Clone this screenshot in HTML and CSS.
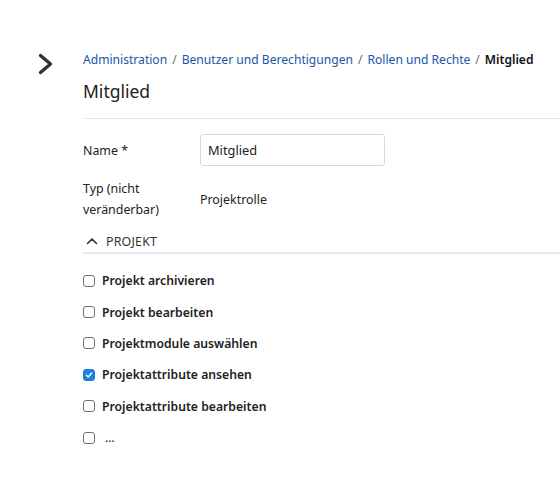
FILE: index.html
```html
<!DOCTYPE html>
<html lang="de">
<head>
<meta charset="utf-8">
<link rel="stylesheet" href="styles.css">
</head>
<body>
<div class="layout">
  <div class="side">
    <svg class="toggle" width="16" height="22" viewBox="0 0 16 22"><path d="M2.5 2.5 L12.5 11 L2.5 19.5" fill="none" stroke="#333" stroke-width="3.4" stroke-linecap="round" stroke-linejoin="round"/></svg>
  </div>
  <main class="content">
    <nav class="crumbs">
      <a href="#">Administration</a><span class="sep">/</span><a href="#">Benutzer und Berechtigungen</a><span class="sep">/</span><a href="#">Rollen und Rechte</a><span class="sep">/</span><span class="current">Mitglied</span>
    </nav>
    <h1 class="title">Mitglied</h1>
    <div class="divider"></div>
    <div class="row row-name">
      <label class="lbl">Name *</label>
      <input class="field" type="text" value="Mitglied">
    </div>
    <div class="row row-type">
      <div class="lbl">Typ (nicht<br>veränderbar)</div>
      <div class="val">Projektrolle</div>
    </div>
    <div class="section">
      <svg class="caret" width="12" height="8" viewBox="0 0 12 8"><path d="M1.5 6.5 L6 2 L10.5 6.5" fill="none" stroke="#333" stroke-width="1.6" stroke-linecap="round" stroke-linejoin="round"/></svg>
      <span>PROJEKT</span>
    </div>
    <ul class="perms">
      <li><span class="cb"></span>Projekt archivieren</li>
      <li><span class="cb"></span>Projekt bearbeiten</li>
      <li><span class="cb"></span>Projektmodule auswählen</li>
      <li><span class="cb on"><svg width="12" height="12" viewBox="0 0 12 12"><path d="M2.8 6.2 L5 8.3 L9.2 3.6" fill="none" stroke="#fff" stroke-width="1.7" stroke-linecap="round" stroke-linejoin="round"/></svg></span>Projektattribute ansehen</li>
      <li><span class="cb"></span>Projektattribute bearbeiten</li>
      <li><span class="cb"></span><span class="dots">…</span></li>
    </ul>
  </main>
</div>
</body>
</html>
```

FILE: styles.css
```css
html, body {
  margin: 0;
  padding: 0;
  background: #fff;
}
body {
  font-family: "Noto Sans", "Open Sans", sans-serif;
  color: #222;
  font-size: 12.4px;
}
.layout {
  display: flex;
}
.side {
  width: 83px;
  flex: none;
  padding: 53px 0 0 38px;
  box-sizing: border-box;
}
.toggle {
  display: block;
}
.content {
  flex: 1;
  min-width: 0;
}
.crumbs {
  margin-top: 50px;
  line-height: 20px;
  white-space: nowrap;
  font-size: 12.1px;
}
.crumbs a {
  color: #1a56a8;
  text-decoration: none;
}
.sep {
  margin: 0 5px;
  color: #666;
}
.current {
  font-weight: 600;
  color: #111;
}
.title {
  margin: 9px 0 0;
  font-size: 17.5px;
  font-weight: 400;
  line-height: 24px;
  color: #222;
}
.divider {
  margin-top: 15px;
  height: 1px;
  background: #e6e9ed;
}
.row {
  display: flex;
  align-items: center;
}
.lbl {
  width: 117px;
  flex: none;
  line-height: 21px;
}
.row-name {
  margin-top: 15px;
}
.field {
  width: 185px;
  height: 32px;
  box-sizing: border-box;
  border: 1px solid #d4d8de;
  border-radius: 3px;
  padding: 0 7px;
  font: inherit;
  font-size: 12.8px;
  color: #222;
  outline: none;
}
.row-type {
  margin-top: 12px;
}
.section {
  margin-top: 11px;
  display: flex;
  align-items: center;
  gap: 8px;
  padding: 0 0 1px 3px;
  height: 20px;
  border-bottom: 2px solid #e6e9ed;
  color: #333;
  letter-spacing: 0.2px;
}
.caret {
  display: block;
}
.perms {
  list-style: none;
  margin: 11px 0 0;
  padding: 0;
}
.perms li {
  display: flex;
  align-items: center;
  height: 31.4px;
  font-weight: 600;
  font-size: 12.2px;
  color: #222;
}
.cb {
  width: 12px;
  height: 12px;
  flex: none;
  box-sizing: border-box;
  border: 1px solid #707070;
  border-radius: 3px;
  margin-right: 7px;
  display: flex;
  align-items: center;
  justify-content: center;
}
.cb.on {
  background: #1d7fe0;
  border-color: #1d7fe0;
}
.cb svg {
  display: block;
}
.dots {
  margin-left: 3px;
  font-weight: 400;
}
```
